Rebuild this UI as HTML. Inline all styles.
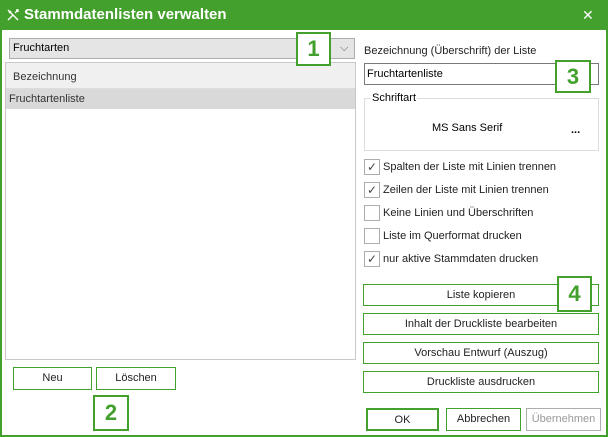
<!DOCTYPE html>
<html><head><meta charset="utf-8"><style>
*{box-sizing:border-box;margin:0;padding:0}
body{width:608px;height:437px;background:#fff;font-family:"Liberation Sans",sans-serif;font-size:11px;color:#000;position:relative;overflow:hidden}
.a{position:absolute}
.win{left:0;top:0;width:608px;height:437px;border:2px solid #43a02d;border-top:none}
.title{left:0;top:0;width:608px;height:30px;background:#43a02d;color:#fff}
.btn{position:absolute;border:1px solid #43a02d;background:#fff;text-align:center;line-height:21px;font-size:11px;color:#222}
.box{position:absolute;border:2px solid #43a02d;background:#fff;color:#43a02d;font-weight:bold;font-size:22px;text-align:center}
.cb{position:absolute;left:364px;width:16px;height:16px;border:1px solid #adadad;background:#fff;font-size:12px;line-height:14px;text-align:center;color:#444}
.cl{position:absolute;left:383px;font-size:11px;color:#222}
</style></head><body>
<div class="a title">
 <svg class="a" style="left:6px;top:8px" width="14" height="14" viewBox="0 0 14 14" stroke="#fff" stroke-width="1.4" fill="none"><path d="M2 2L12 12M2 12L7 7M9 5L12 2M10 2h2v2M5 3L3 5"/></svg>
 <div class="a" style="left:24px;top:6px;font-size:15px;font-weight:bold">Stammdatenlisten verwalten</div>
 <div class="a" style="left:582px;top:7px;font-size:14px">✕</div>
</div>
<div class="a win"></div>
<div class="a" style="left:9px;top:38px;width:346px;height:21px;background:#e5e5e5;border:1px solid #adadad;padding-left:3px;line-height:19px">Fruchtarten<span class="a" style="left:330px;top:0;color:#555">⌵</span></div>
<div class="a" style="left:5px;top:62px;width:351px;height:298px;border:1px solid #c8c8c8">
 <div class="a" style="left:0;top:0;width:349px;height:26px;background:#f0f0f0;border-bottom:1px solid #ddd;padding:8px 0 0 7px;color:#333">Bezeichnung</div>
 <div class="a" style="left:0;top:26px;width:349px;height:20px;background:#d9d9d9;padding:4px 0 0 3px;color:#333">Fruchtartenliste</div>
</div>
<div class="box" style="left:296px;top:32px;width:35px;height:34px;line-height:30px">1</div>
<div class="btn" style="left:13px;top:367px;width:79px;height:23px">Neu</div>
<div class="btn" style="left:96px;top:367px;width:80px;height:23px">Löschen</div>
<div class="box" style="left:93px;top:395px;width:36px;height:36px;line-height:32px">2</div>

<div class="a" style="left:364px;top:45px;color:#222">Bezeichnung (Überschrift) der Liste</div>
<div class="a" style="left:364px;top:63px;width:235px;height:22px;border:1px solid #7a7a7a;padding:4px 0 0 2px">Fruchtartenliste</div>
<div class="box" style="left:555px;top:60px;width:36px;height:33px;line-height:30px">3</div>
<div class="a" style="left:364px;top:98px;width:235px;height:53px;border:1px solid #dcdcdc"></div>
<div class="a" style="left:371px;top:92px;background:#fff;padding:0 1px">Schriftart</div>
<div class="a" style="left:432px;top:122px">MS Sans Serif</div>
<div class="a" style="left:571px;top:124px;font-weight:bold">...</div>

<div class="cb" style="top:159px">✓</div><div class="cl" style="top:161px">Spalten der Liste mit Linien trennen</div>
<div class="cb" style="top:182px">✓</div><div class="cl" style="top:184px">Zeilen der Liste mit Linien trennen</div>
<div class="cb" style="top:205px"></div><div class="cl" style="top:207px">Keine Linien und Überschriften</div>
<div class="cb" style="top:228px"></div><div class="cl" style="top:230px">Liste im Querformat drucken</div>
<div class="cb" style="top:251px">✓</div><div class="cl" style="top:253px">nur aktive Stammdaten drucken</div>

<div class="btn" style="left:363px;top:284px;width:236px;height:22px">Liste kopieren</div>
<div class="box" style="left:557px;top:276px;width:35px;height:36px;line-height:32px">4</div>
<div class="btn" style="left:363px;top:313px;width:236px;height:22px">Inhalt der Druckliste bearbeiten</div>
<div class="btn" style="left:363px;top:342px;width:236px;height:22px">Vorschau Entwurf (Auszug)</div>
<div class="btn" style="left:363px;top:371px;width:236px;height:22px">Druckliste ausdrucken</div>
<div class="btn" style="left:366px;top:408px;width:73px;height:23px;border-width:2px;line-height:20px">OK</div>
<div class="btn" style="left:446px;top:408px;width:75px;height:23px">Abbrechen</div>
<div class="btn" style="left:526px;top:408px;width:75px;height:23px;border-color:#adadad;color:#999">Übernehmen</div>
</body></html>
